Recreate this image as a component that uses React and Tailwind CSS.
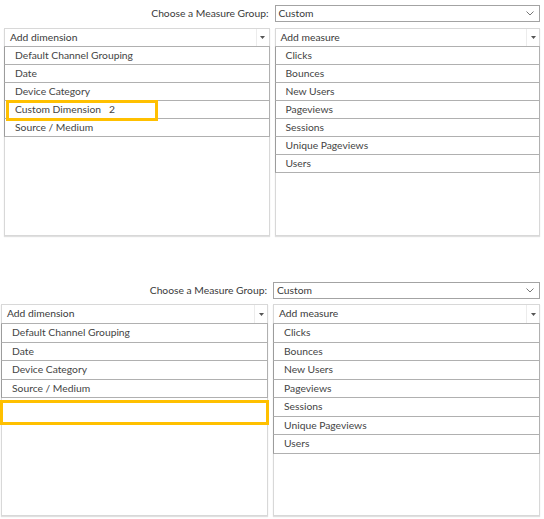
import React from 'react';

const font = { fontFamily: 'Lato, "Open Sans", sans-serif' };

const dimsTop = ['Default Channel Grouping', 'Date', 'Device Category', 'Custom Dimension\u00a0\u00a0\u00a02', 'Source / Medium'];
const dimsBottom = ['Default Channel Grouping', 'Date', 'Device Category', 'Source / Medium'];
const measures = ['Clicks', 'Bounces', 'New Users', 'Pageviews', 'Sessions', 'Unique Pageviews', 'Users'];

function Caret() {
  return (
    <svg width="5" height="3" viewBox="0 0 5 3">
      <path d="M0 0h5L2.5 3z" fill="#555" />
    </svg>
  );
}

function Chevron() {
  return (
    <svg width="8" height="5" viewBox="0 0 8 5">
      <path d="M0.5 0.5L4 4L7.5 0.5" fill="none" stroke="#777" strokeWidth="1" />
    </svg>
  );
}

function GroupRow({ height }) {
  return (
    <div className={`grid grid-cols-2 gap-[5px] items-center ${height}`}>
      <div className="text-right text-[10.3px] text-[#3a3a3a] pr-[1px]">Choose a Measure Group:</div>
      <div className="h-full border border-[#a3a3a3] bg-white flex items-center justify-between pl-[3px] pr-[5px] text-[10.3px] text-[#3a3a3a]">
        <span>Custom</span>
        <Chevron />
      </div>
    </div>
  );
}

function Panel({ title, items, headH, rowH, height, highlight, blank, textPad }) {
  return (
    <div className={`border border-[#d8d8d8] bg-white shadow-[0_1px_1px_rgba(0,0,0,0.12)] ${height}`}>
      <div className={`flex items-stretch ${headH}`}>
        <div className="flex-1 flex items-center pl-[5px] text-[10.3px] text-[#3a3a3a]">{title}</div>
        <div className="w-[13px] border-l border-[#ececec] flex items-center justify-center">
          <Caret />
        </div>
      </div>
      <div className="-mx-px border-t border-[#b0b0b0]">
        {items.map((it) => (
          <div
            key={it}
            className={`relative flex items-center border-x border-b border-[#b0b0b0] border-l-[#9c9c9c] ${rowH} ${textPad} text-[10.3px] text-[#444]`}
          >
            {it}
            {highlight === it && (
              <div className="absolute left-[1px] top-[-1px] w-[152px] h-[21px] border-[3px] border-[#ffc000]" />
            )}
          </div>
        ))}
      </div>
      {blank && <div className="-mx-[2px] mt-[2px] h-[25px] border-[3px] border-[#ffc000]" />}
    </div>
  );
}

export default function App() {
  return (
    <div className="w-[544px] h-[519px] bg-white overflow-hidden" style={font}>
      {/* first state */}
      <div className="pt-[5px] pl-[4px] w-[540px]">
        <GroupRow height="h-[17px]" />
        <div className="mt-[6px] grid grid-cols-2 gap-[5px]">
          <Panel
            title="Add dimension"
            items={dimsTop}
            headH="h-[17px]"
            rowH="h-[18px]"
            height="h-[208px]"
            highlight={dimsTop[3]}
            textPad="pl-[10px]"
          />
          <Panel
            title="Add measure"
            items={measures}
            headH="h-[17px]"
            rowH="h-[18px]"
            height="h-[208px]"
            textPad="pl-[10px]"
          />
        </div>
      </div>

      {/* second state */}
      <div className="mt-[46px] pl-[1px] w-[540px]">
        <GroupRow height="h-[17px]" />
        <div className="mt-[5px] grid grid-cols-2 gap-[5px]">
          <Panel
            title="Add dimension"
            items={dimsBottom}
            headH="h-[18px]"
            rowH="h-[18.5px]"
            height="h-[212px]"
            blank
            textPad="pl-[10px]"
          />
          <Panel
            title="Add measure"
            items={measures}
            headH="h-[18px]"
            rowH="h-[18.5px]"
            height="h-[212px]"
            textPad="pl-[10px]"
          />
        </div>
      </div>
    </div>
  );
}
